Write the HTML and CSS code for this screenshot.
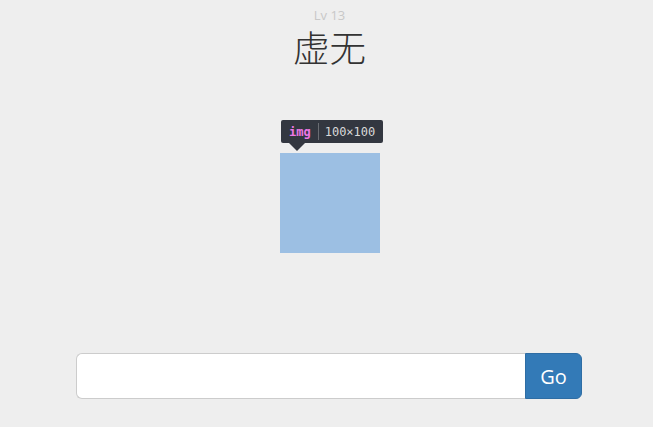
FILE: index.html
```html
<!DOCTYPE html>
<html>
<head>
<meta charset="utf-8">
<link rel="stylesheet" href="styles.css">
</head>
<body>
<div class="page">
  <header class="head">
    <div class="level">Lv 13</div>
    <h1 class="title">虚无</h1>
  </header>
  <div class="stage">
    <div class="pic">
      <div class="tip"><span class="tag">img</span><span class="sep"></span><span class="dim">100×100</span></div>
    </div>
  </div>
  <form class="group">
    <input class="field" type="text">
    <button class="go" type="button">Go</button>
  </form>
</div>
</body>
</html>
```
FILE: styles.css
```css
html, body { margin: 0; padding: 0; }
body {
  background: #eeeeee;
  font-family: "Open Sans", "Noto Sans", sans-serif;
  width: 653px;
  height: 427px;
  overflow: hidden;
}
.page { display: flex; flex-direction: column; align-items: center; }
.head { display: flex; flex-direction: column; align-items: center; padding-top: 9px; }
.level { font-size: 13px; line-height: 13px; color: #c8c8c8; margin-left: 6px; }
.title {
  margin: 0;
  font-family: "Liberation Sans", "Noto Sans CJK SC", sans-serif;
  font-weight: 300;
  font-size: 36.5px;
  line-height: 55px;
  color: #333;
  margin-left: 6px;
}
.stage { margin-top: 76px; height: 200px; display: flex; justify-content: center; }
.pic {
  position: relative;
  width: 100px; height: 100px;
  background: #9cbfe3;
  margin-left: 7px;
}
.tip {
  position: absolute;
  left: 1px; top: -33px;
  height: 23px;
  padding: 0 8px;
  background: #333740;
  border-radius: 2px;
  display: flex; align-items: center;
  font-family: "DejaVu Sans Mono", monospace;
  font-size: 12px;
  white-space: nowrap;
  color: #d9d9d9;
}
.tip::after {
  content: "";
  position: absolute;
  left: 8px; top: 23px;
  border-left: 8px solid transparent;
  border-right: 8px solid transparent;
  border-top: 8px solid #333740;
}
.tag { color: #ee78e6; font-weight: bold; }
.sep { width: 1px; height: 17px; background: #6a6d73; margin: 0 6px 0 7px; }
.group {
  display: flex;
  margin: 0;
  margin-left: 5px;
  width: 506px;
  height: 46px;
}
.field {
  flex: 1;
  box-sizing: border-box;
  height: 46px;
  margin: 0;
  border: 1px solid #cccccc;
  border-right: 0;
  border-radius: 6px 0 0 6px;
  background: #fff;
  padding: 10px 16px;
  font-size: 18px;
  outline: none;
}
.go {
  box-sizing: border-box;
  width: 57px;
  height: 46px;
  margin: 0;
  border: 1px solid #2e6da4;
  border-radius: 0 6px 6px 0;
  background: #337ab7;
  color: #fff;
  font-family: "Open Sans", sans-serif;
  font-size: 20px;
  padding: 0;
}
```
